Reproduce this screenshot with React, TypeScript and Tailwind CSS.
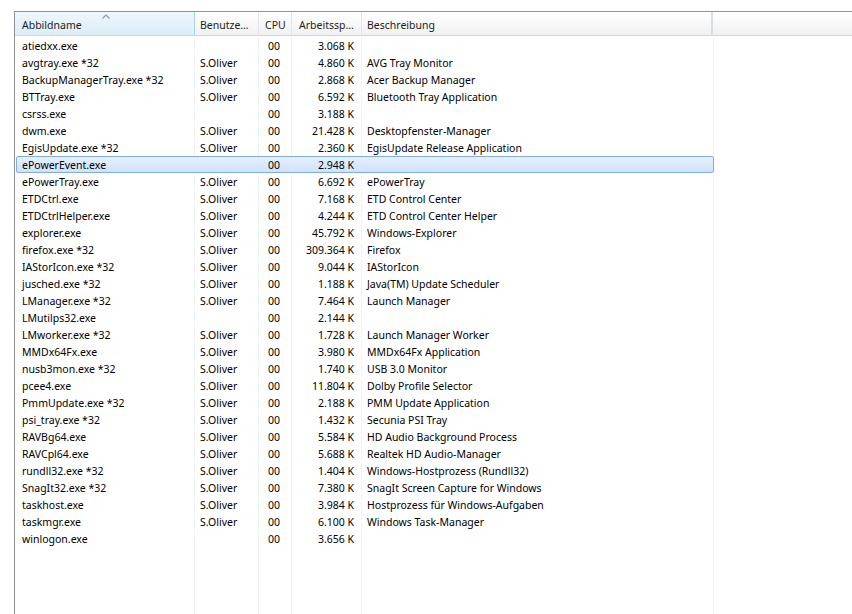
import React from "react";

type Row = [string, string, string, string];

const rows: Row[] = [
  ["atiedxx.exe", "", "3.068 K", ""],
  ["avgtray.exe *32", "S.Oliver", "4.860 K", "AVG Tray Monitor"],
  ["BackupManagerTray.exe *32", "S.Oliver", "2.868 K", "Acer Backup Manager"],
  ["BTTray.exe", "S.Oliver", "6.592 K", "Bluetooth Tray Application"],
  ["csrss.exe", "", "3.188 K", ""],
  ["dwm.exe", "S.Oliver", "21.428 K", "Desktopfenster-Manager"],
  ["EgisUpdate.exe *32", "S.Oliver", "2.360 K", "EgisUpdate Release Application"],
  ["ePowerEvent.exe", "", "2.948 K", ""],
  ["ePowerTray.exe", "S.Oliver", "6.692 K", "ePowerTray"],
  ["ETDCtrl.exe", "S.Oliver", "7.168 K", "ETD Control Center"],
  ["ETDCtrlHelper.exe", "S.Oliver", "4.244 K", "ETD Control Center Helper"],
  ["explorer.exe", "S.Oliver", "45.792 K", "Windows-Explorer"],
  ["firefox.exe *32", "S.Oliver", "309.364 K", "Firefox"],
  ["IAStorIcon.exe *32", "S.Oliver", "9.044 K", "IAStorIcon"],
  ["jusched.exe *32", "S.Oliver", "1.188 K", "Java(TM) Update Scheduler"],
  ["LManager.exe *32", "S.Oliver", "7.464 K", "Launch Manager"],
  ["LMutilps32.exe", "", "2.144 K", ""],
  ["LMworker.exe *32", "S.Oliver", "1.728 K", "Launch Manager Worker"],
  ["MMDx64Fx.exe", "S.Oliver", "3.980 K", "MMDx64Fx Application"],
  ["nusb3mon.exe *32", "S.Oliver", "1.740 K", "USB 3.0 Monitor"],
  ["pcee4.exe", "S.Oliver", "11.804 K", "Dolby Profile Selector"],
  ["PmmUpdate.exe *32", "S.Oliver", "2.188 K", "PMM Update Application"],
  ["psi_tray.exe *32", "S.Oliver", "1.432 K", "Secunia PSI Tray"],
  ["RAVBg64.exe", "S.Oliver", "5.584 K", "HD Audio Background Process"],
  ["RAVCpl64.exe", "S.Oliver", "5.688 K", "Realtek HD Audio-Manager"],
  ["rundll32.exe *32", "S.Oliver", "1.404 K", "Windows-Hostprozess (Rundll32)"],
  ["SnagIt32.exe *32", "S.Oliver", "7.380 K", "SnagIt Screen Capture for Windows"],
  ["taskhost.exe", "S.Oliver", "3.984 K", "Hostprozess für Windows-Aufgaben"],
  ["taskmgr.exe", "S.Oliver", "6.100 K", "Windows Task-Manager"],
  ["winlogon.exe", "", "3.656 K", ""],
];

const line = "border-r border-[#edf3f9]";

function Cells({ r, sel }: { r?: Row; sel?: boolean }) {
  const b = sel ? "border-r border-transparent" : line;
  return (
    <>
      <div className={`w-[180px] shrink-0 pl-[7px] whitespace-nowrap ${b}`}>{r ? r[0] : ""}</div>
      <div className={`w-[64px] shrink-0 pl-[5px] whitespace-nowrap ${b}`}>{r ? r[1] : ""}</div>
      <div className={`w-[33px] shrink-0 pl-[9px] whitespace-nowrap ${b}`}>{r ? "00" : ""}</div>
      <div className={`w-[70px] shrink-0 pr-[7px] text-right whitespace-nowrap ${b}`}>{r ? r[2] : ""}</div>
      <div className={`w-[352px] shrink-0 pl-[5px] whitespace-nowrap ${b}`}>{r ? r[3] : ""}</div>
      <div className="flex-1" />
    </>
  );
}

export default function App() {
  return (
    <div
      className="w-[852px] h-[614px] bg-white pt-[11px] pl-[14px] overflow-hidden text-[10.5px] text-black"
      style={{ fontFamily: '"Noto Sans", "Open Sans", sans-serif' }}
    >
      <div className="h-full flex flex-col border-t border-l border-[#8e9198]">
        {/* header */}
        <div className="h-[24px] shrink-0 flex border-b border-[#d5d5d5] bg-gradient-to-b from-white to-[#f0f1f3] text-[#1c1c1c]">
          <div className="relative w-[180px] shrink-0 pl-[7px] pt-[4px] flex items-center border-r border-[#a9d2ee] bg-gradient-to-b from-[#eef7fd] to-[#dcedf9]">
            Abbildname
            <svg className="absolute left-[87px] top-[2px]" width="8" height="5" viewBox="0 0 8 5">
              <path d="M0.5 4.5 L4 1 L7.5 4.5" fill="none" stroke="#8a9aad" strokeWidth="1.2" />
            </svg>
          </div>
          <div className="w-[64px] shrink-0 pl-[5px] pt-[4px] flex items-center border-r border-[#e3e5e8] whitespace-nowrap">Benutze…</div>
          <div className="w-[33px] shrink-0 pl-[6px] pt-[4px] flex items-center border-r border-[#e3e5e8]">CPU</div>
          <div className="w-[70px] shrink-0 pl-[7px] pt-[4px] flex items-center border-r border-[#e3e5e8] whitespace-nowrap">Arbeitssp…</div>
          <div className="w-[351px] shrink-0 pl-[5px] pt-[4px] flex items-center border-r-2 border-[#dadde1]">Beschreibung</div>
          <div className="flex-1" />
        </div>
        {/* body */}
        <div className="flex-1 flex flex-col pt-[1px]">
          {rows.map((r, i) => {
            const sel = i === 7;
            return (
              <div key={i} className="relative h-[17px] leading-[17px] flex">
                {sel && (
                  <div className="absolute left-[1px] top-0 w-[698px] h-[17px] rounded-[2px] border border-[#84acdd] bg-gradient-to-b from-[#e6f0fd] to-[#cfe2fb]" />
                )}
                <div className="relative flex flex-1 pt-[1px]">
                  <Cells r={r} sel={sel} />
                </div>
              </div>
            );
          })}
          <div className="flex-1 flex">
            <Cells />
          </div>
        </div>
      </div>
    </div>
  );
}
